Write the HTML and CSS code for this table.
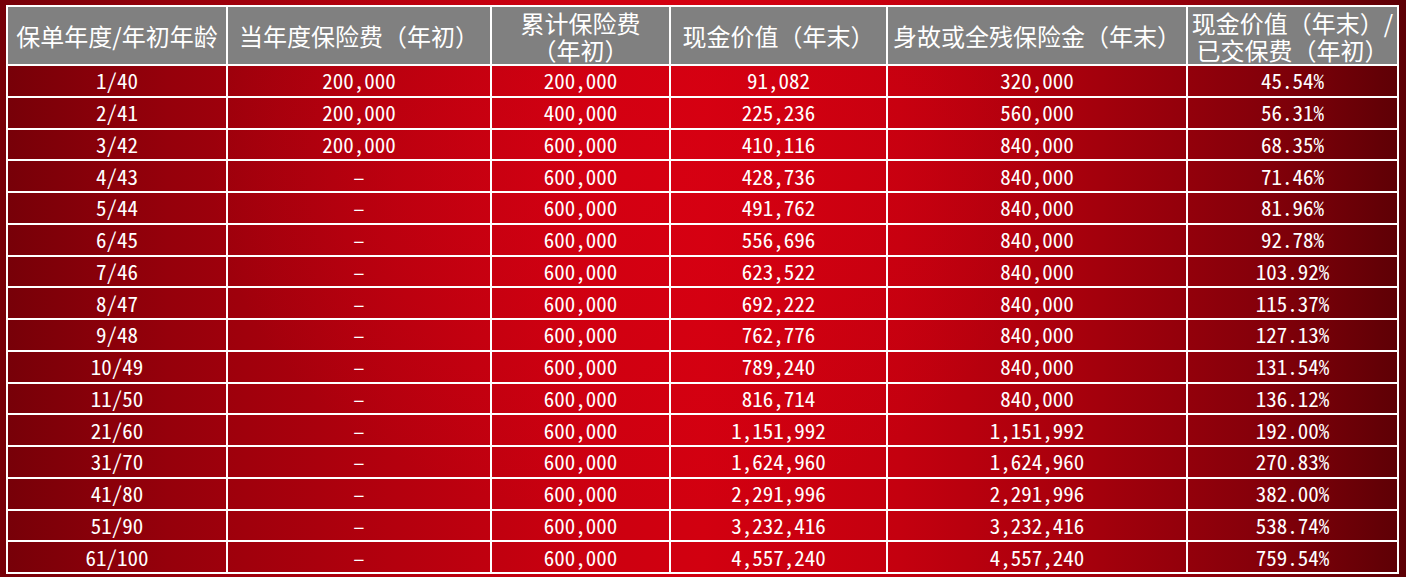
FILE: index.html
```html
<!DOCTYPE html>
<html lang="zh-CN">
<head>
<meta charset="utf-8">
<title>现金价值表</title>
<link rel="stylesheet" href="styles.css">
</head>
<body>
<div class="page">
<table class="value-table">
  <colgroup>
    <col class="c1"><col class="c2"><col class="c3"><col class="c4"><col class="c5"><col class="c6">
  </colgroup>
  <thead>
    <tr>
      <th>保单年度/年初年龄</th>
      <th>当年度保险费（年初）</th>
      <th>累计保险费<br>（年初）</th>
      <th>现金价值（年末）</th>
      <th>身故或全残保险金（年末）</th>
      <th>现金价值（年末）/<br>已交保费（年初）</th>
    </tr>
  </thead>
  <tbody>
    <tr><td>1/40</td><td>200,000</td><td>200,000</td><td>91,082</td><td>320,000</td><td>45.54%</td></tr>
    <tr><td>2/41</td><td>200,000</td><td>400,000</td><td>225,236</td><td>560,000</td><td>56.31%</td></tr>
    <tr><td>3/42</td><td>200,000</td><td>600,000</td><td>410,116</td><td>840,000</td><td>68.35%</td></tr>
    <tr><td>4/43</td><td>–</td><td>600,000</td><td>428,736</td><td>840,000</td><td>71.46%</td></tr>
    <tr><td>5/44</td><td>–</td><td>600,000</td><td>491,762</td><td>840,000</td><td>81.96%</td></tr>
    <tr><td>6/45</td><td>–</td><td>600,000</td><td>556,696</td><td>840,000</td><td>92.78%</td></tr>
    <tr><td>7/46</td><td>–</td><td>600,000</td><td>623,522</td><td>840,000</td><td>103.92%</td></tr>
    <tr><td>8/47</td><td>–</td><td>600,000</td><td>692,222</td><td>840,000</td><td>115.37%</td></tr>
    <tr><td>9/48</td><td>–</td><td>600,000</td><td>762,776</td><td>840,000</td><td>127.13%</td></tr>
    <tr><td>10/49</td><td>–</td><td>600,000</td><td>789,240</td><td>840,000</td><td>131.54%</td></tr>
    <tr><td>11/50</td><td>–</td><td>600,000</td><td>816,714</td><td>840,000</td><td>136.12%</td></tr>
    <tr><td>21/60</td><td>–</td><td>600,000</td><td>1,151,992</td><td>1,151,992</td><td>192.00%</td></tr>
    <tr><td>31/70</td><td>–</td><td>600,000</td><td>1,624,960</td><td>1,624,960</td><td>270.83%</td></tr>
    <tr><td>41/80</td><td>–</td><td>600,000</td><td>2,291,996</td><td>2,291,996</td><td>382.00%</td></tr>
    <tr><td>51/90</td><td>–</td><td>600,000</td><td>3,232,416</td><td>3,232,416</td><td>538.74%</td></tr>
    <tr><td>61/100</td><td>–</td><td>600,000</td><td>4,557,240</td><td>4,557,240</td><td>759.54%</td></tr>
  </tbody>
</table>
</div>
</body>
</html>
```

FILE: styles.css
```css
html, body {
  margin: 0;
  padding: 0;
}

body {
  width: 1406px;
  height: 577px;
  overflow: hidden;
  background:
    radial-gradient(ellipse 30% 60% at 45% 30%, rgba(220, 0, 20, 0.5) 0%, rgba(220, 0, 20, 0) 100%),
    linear-gradient(90deg, #760008 0%, #96000b 12%, #b4000e 28%, #cc0010 42%, #d20010 50%, #c4000f 64%, #a4000c 78%, #84000a 90%, #5c0005 100%);
  font-family: "Noto Sans CJK SC", "Noto Sans", sans-serif;
  color: #ffffff;
}

.page {
  padding: 5px 0 0 6px;
}

.value-table {
  width: 1391px;
  border-collapse: collapse;
  table-layout: fixed;
  border: 2px solid #ffffff;
}

.c1 { width: 220px; }
.c2 { width: 264px; }
.c3 { width: 179px; }
.c4 { width: 217px; }
.c5 { width: 300px; }
.c6 { width: 211px; }

.value-table th,
.value-table td {
  border: 2px solid #ffffff;
  padding: 0;
  text-align: center;
  vertical-align: middle;
  white-space: nowrap;
}

.value-table th {
  height: 57px;
  background: #808080;
  font-weight: normal;
  font-size: 24px;
  line-height: 27px;
  color: #ffffff;
}

.value-table td {
  height: 29.75px;
  font-size: 21px;
  line-height: 25px;
  font-feature-settings: "hwid" 1;
}
```
